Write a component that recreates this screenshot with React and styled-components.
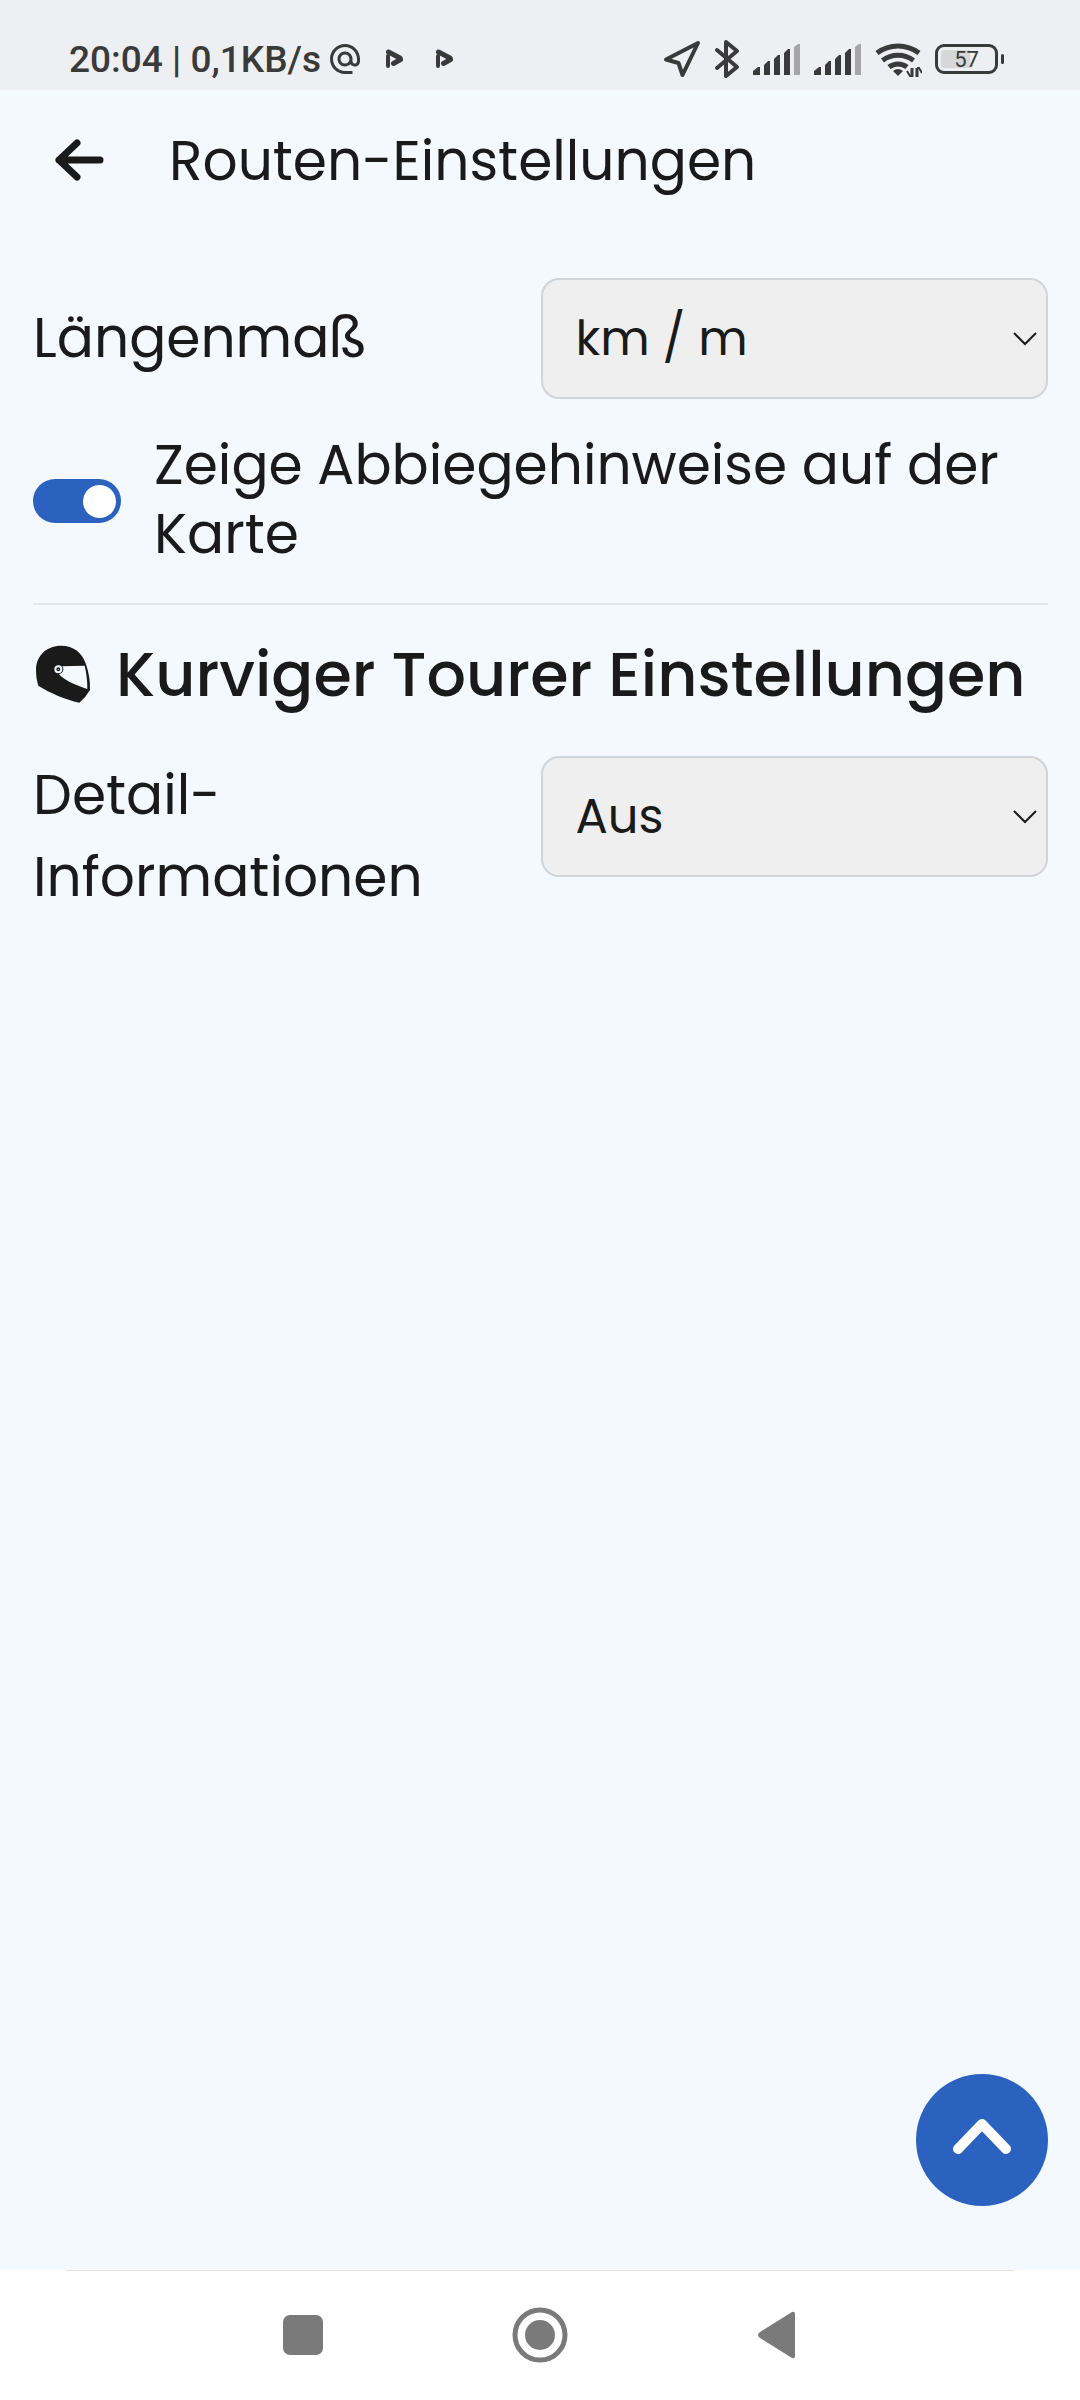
import React from 'react'
import styled, { createGlobalStyle } from 'styled-components'
import { MdAlternateEmail } from 'react-icons/md'

const GlobalStyle = createGlobalStyle`
  * {
    box-sizing: border-box;
  }
  body {
    margin: 0;
    background-color: #f4f9ff;
    color: #1a1a1a;
    font-family: Poppins, Inter, sans-serif;
  }
`

const Page = styled.div`
  display: flex;
  flex-direction: column;
  min-height: 100vh;
`

const StatusBar = styled.div`
  display: flex;
  justify-content: space-between;
  height: 90px;
  padding: 28px 76px 0 69px;
  background-color: #eeeff2;
  color: #3a3a3a;
  font-family: Roboto, sans-serif;
`

const StatusGroup = styled.div`
  display: flex;
  align-items: center;
  gap: ${props => props.$gap}px;
`

const Clock = styled.span`
  padding-top: 2px;
  font-size: 37px;
  font-weight: 500;
  line-height: 40px;
  white-space: nowrap;
`

const Notifications = styled.div`
  display: flex;
  align-items: center;
  gap: 31px;
  margin-left: 16px;
`

const Battery = styled.div`
  display: flex;
  align-items: center;
  gap: 3px;
  &::after {
    content: '';
    width: 3px;
    height: 10px;
    border-radius: 2px;
    background-color: #3a3a3a;
  }
`

const BatteryLevel = styled.span`
  width: 63px;
  height: 30px;
  border: 3px solid #3a3a3a;
  border-radius: 9px;
  padding: 3px;
  background: linear-gradient(to right, #d6d7d9 57%, transparent 57%) content-box;
  font-size: 22px;
  line-height: 20px;
  text-align: center;
`

const Header = styled.header`
  display: flex;
  align-items: center;
  gap: 63px;
  height: 142px;
  padding: 0 52px;
`

const IconButton = styled.button`
  display: flex;
  padding: 0;
  border: none;
  background: none;
  color: inherit;
`

const Title = styled.h1`
  margin: 0;
  font-size: 55px;
  font-weight: 400;
  line-height: 80px;
`

const Main = styled.main`
  flex: 1;
  padding: 44px 32px 0 33px;
`

const Field = styled.div`
  display: grid;
  grid-template-columns: 1fr 1fr;
  align-items: center;
`

const FieldLabel = styled.label`
  font-size: 55px;
  line-height: 82px;
`

const SelectBox = styled.div`
  position: relative;
  align-self: start;
  margin-top: 2px;
  svg {
    position: absolute;
    top: 53px;
    right: 10px;
    pointer-events: none;
  }
`

const Select = styled.select`
  appearance: none;
  display: block;
  width: 100%;
  height: 121px;
  padding: 0 50px 0 33px;
  border: 2px solid #d0d5dc;
  border-radius: 18px;
  background-color: #efefef;
  color: inherit;
  font-family: inherit;
  font-size: 48px;
`

const SwitchRow = styled.div`
  display: flex;
  align-items: center;
  gap: 33px;
  margin-top: 31px;
  padding-bottom: 35px;
  border-bottom: 2px solid #e1e6ef;
`

const Switch = styled.input`
  appearance: none;
  display: flex;
  flex: none;
  align-items: center;
  width: 88px;
  height: 44px;
  margin: 4px 0 0;
  padding: 0 5px;
  border-radius: 22px;
  background-color: #a9b0ba;
  &::before {
    content: '';
    width: 33px;
    height: 33px;
    border-radius: 50%;
    background-color: #fff;
  }
  &:checked {
    justify-content: flex-end;
    background-color: #2b62c0;
  }
`

const SwitchLabel = styled.label`
  font-size: 55px;
  line-height: 69px;
`

const SectionTitle = styled.h2`
  display: flex;
  align-items: center;
  gap: 22px;
  margin: 30px 0 39px;
  font-size: 62px;
  font-weight: 500;
  line-height: 80px;
  white-space: nowrap;
`

const ScrollTop = styled.button`
  display: flex;
  flex: none;
  align-items: center;
  justify-content: center;
  align-self: flex-end;
  width: 132px;
  height: 132px;
  margin: 0 32px 64px 0;
  padding: 0 0 2px;
  border: none;
  border-radius: 50%;
  background-color: #2b62c0;
`

const NavBar = styled.nav`
  display: flex;
  flex-direction: column;
  height: 130px;
  padding-bottom: 2px;
  background-color: #fff;
  &::before {
    content: '';
    height: 1px;
    margin: 0 66px;
    background-color: #dfe2e5;
  }
`

const NavButtons = styled.div`
  display: flex;
  flex: 1;
  align-items: center;
  justify-content: center;
  gap: 181px;
  color: #7a7a7a;
`

const LocationIcon = () => (
  <svg width="38" height="40" viewBox="0 0 38 40" fill="none" stroke="currentColor" strokeWidth="4" strokeLinejoin="round">
    <path d="M35 4 L19.5 36 L15.5 24 L3 20.5 Z" />
  </svg>
)

const BluetoothIcon = () => (
  <svg width="26" height="40" viewBox="0 0 26 40" fill="none" stroke="currentColor" strokeWidth="4" strokeLinecap="round" strokeLinejoin="round">
    <path d="M3 11 L23 28 L12 37 V3 L23 12 L3 29" />
  </svg>
)

const SignalIcon = () => (
  <svg width="48" height="32" viewBox="0 0 48 32" fill="currentColor">
    <path d="M0 32 V28 L5 24 H7 V32 Z" />
    <path d="M11 32 V22 L15 18 H17 V32 Z" />
    <path d="M21 32 V16 L25 12 H27 V32 Z" />
    <path d="M31 32 V10 L35 6 H37 V32 Z" />
    <path d="M41 32 V4 L45 1 H47 V32 Z" opacity="0.4" />
  </svg>
)

const WifiIcon = () => (
  <svg width="47" height="38" viewBox="0 0 47 38" fill="none" stroke="currentColor" strokeWidth="5">
    <path d="M2 13 A35 35 0 0 1 44 13" />
    <path d="M7.5 20.5 A26 26 0 0 1 38.5 20.5" />
    <path d="M14 27 A15 15 0 0 1 32 27" />
    <path d="M18 31 Q23 27 28 31 L23 36 Z" fill="currentColor" stroke="none" />
    <path d="M37 28 V37 M42 28 V37" strokeWidth="3" />
    <path d="M32 31 L35 36 H37 M47 33 L44 28 H42" strokeWidth="2" />
  </svg>
)

const PlayIcon = () => (
  <svg width="19" height="22" viewBox="0 0 19 22" fill="none" stroke="currentColor" strokeWidth="5" strokeLinecap="round">
    <path d="M3 8 V18" strokeWidth="4" />
    <path d="M3.5 4 L15 10" />
    <path d="M8.5 15.5 L15.5 11.5" />
  </svg>
)

const BackIcon = () => (
  <svg width="54" height="44" viewBox="0 0 54 44" fill="none" stroke="currentColor" strokeWidth="7" strokeLinecap="round" strokeLinejoin="round">
    <path d="M48 21 H7 M25 4 L7 21 L25 38" />
  </svg>
)

const HelmetIcon = () => (
  <svg width="61" height="61" viewBox="38 43 183 183">
    <path d="M47 116 C48 74 80 45 122 45 C160 45 187 66 198 104 C205 125 210 150 209 178 Q196 201 177 216 C135 206 90 188 54 165 C49 150 47 135 47 116 Z" fill="#1a1a1a" />
    <path d="M120 107 L193 105 C198 125 201 150 201 175 C170 164 140 153 117 132 Z" fill="#f4f9ff" />
    <circle cx="114" cy="116" r="15" fill="#1a1a1a" />
    <circle cx="114" cy="116" r="9" fill="#1a1a1a" stroke="#f4f9ff" strokeWidth="6" />
    <circle cx="114" cy="116" r="2" fill="#f4f9ff" />
  </svg>
)

const ChevronIcon = () => (
  <svg width="26" height="15" viewBox="0 0 26 15" fill="none" stroke="currentColor" strokeWidth="2">
    <path d="M2 2 L13 13 L24 2" />
  </svg>
)

const UpIcon = () => (
  <svg width="60" height="40" viewBox="0 0 60 40" fill="none" stroke="#fff" strokeWidth="10" strokeLinecap="round" strokeLinejoin="round">
    <path d="M6 30 L30 5 L54 30" />
  </svg>
)

const SelectField = ({ id, label, options }) => (
  <Field>
    <FieldLabel htmlFor={id}>{label}</FieldLabel>
    <SelectBox>
      <Select id={id}>
        {options.map(option => <option key={option}>{option}</option>)}
      </Select>
      <ChevronIcon />
    </SelectBox>
  </Field>
)

class App extends React.Component {
  state = {
    hints: true
  }

  onChangeHints = () => {
    this.setState({ hints: !this.state.hints })
  }

  render() {
    return (
      <Page>
        <GlobalStyle />
        <StatusBar>
          <StatusGroup $gap={6}>
            <Clock>20:04 | 0,1KB/s</Clock>
            <MdAlternateEmail size={36} />
            <Notifications>
              <PlayIcon />
              <PlayIcon />
            </Notifications>
          </StatusGroup>
          <StatusGroup $gap={13}>
            <LocationIcon />
            <BluetoothIcon />
            <SignalIcon />
            <SignalIcon />
            <WifiIcon />
            <Battery>
              <BatteryLevel>57</BatteryLevel>
            </Battery>
          </StatusGroup>
        </StatusBar>
        <Header>
          <IconButton aria-label="Zurück"><BackIcon /></IconButton>
          <Title>Routen-Einstellungen</Title>
        </Header>
        <Main>
          <SelectField id="unit" label="Längenmaß" options={['km / m', 'mi / ft']} />
          <SwitchRow>
            <Switch id="hints" type="checkbox" role="switch" checked={this.state.hints} onChange={this.onChangeHints} />
            <SwitchLabel htmlFor="hints">Zeige Abbiegehinweise auf der Karte</SwitchLabel>
          </SwitchRow>
          <SectionTitle>
            <HelmetIcon />
            Kurviger Tourer Einstellungen
          </SectionTitle>
          <SelectField id="details" label="Detail-Informationen" options={['Aus', 'An']} />
        </Main>
        <ScrollTop aria-label="Nach oben"><UpIcon /></ScrollTop>
        <NavBar>
          <NavButtons>
            <IconButton aria-label="Übersicht">
              <svg width="56" height="56" viewBox="0 0 56 56" fill="currentColor">
                <rect x="8" y="8" width="40" height="40" rx="7" />
              </svg>
            </IconButton>
            <IconButton aria-label="Startseite">
              <svg width="56" height="56" viewBox="0 0 56 56" fill="currentColor">
                <circle cx="28" cy="28" r="25" fill="none" stroke="currentColor" strokeWidth="5" />
                <circle cx="28" cy="28" r="15" />
              </svg>
            </IconButton>
            <IconButton aria-label="Zurück">
              <svg width="56" height="56" viewBox="0 0 56 56" fill="currentColor">
                <path d="M11 25 L43 5 Q46 4 46 7 V49 Q46 52 43 51 L11 31 Q7 28 11 25 Z" />
              </svg>
            </IconButton>
          </NavButtons>
        </NavBar>
      </Page>
    )
  }
}

export default App
